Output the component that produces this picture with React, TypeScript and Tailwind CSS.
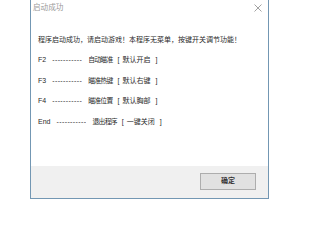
export default function App() {
  const rows = [
    { key: 'F2', label: '自动瞄准', hint: '默认开启' },
    { key: 'F3', label: '瞄准热键', hint: '默认右键' },
    { key: 'F4', label: '瞄准位置', hint: '默认胸部' },
    { key: 'End', label: '退出程序', hint: '一键关闭' },
  ];

  return (
    <div className="w-[300px] h-[200px] bg-white overflow-hidden font-['Liberation_Sans','Noto_Sans_CJK_SC',sans-serif]">
      {/* dialog window */}
      <div className="ml-[30px] w-[239px] h-[199px] flex flex-col border-x border-b border-[#7397b3] bg-white">
        {/* title bar */}
        <div className="h-[16px] flex items-center justify-between pl-[2px] pr-[5px]">
          <span className="text-[7.6px] text-[#9a9a9a] leading-none">启动成功</span>
          <svg width="8" height="8" viewBox="0 0 8 8" className="mr-[1px]">
            <path d="M0.5 0.5 L7.5 7.5 M7.5 0.5 L0.5 7.5" stroke="#8a8a8a" strokeWidth="0.8" />
          </svg>
        </div>

        {/* body */}
        <div className="flex-1 pt-[13.75px] pl-[7px] text-[7px] text-[#2a2a2a]">
          <div className="h-[20.5px] flex items-center whitespace-pre">
            程序启动成功，请启动游戏！本程序无菜单，按键开关调节功能！
          </div>
          {rows.map((r) => (
            <div key={r.key} className="h-[20.5px] flex items-center whitespace-pre">
              <span>{r.key}</span>
              <span className="ml-[6px] w-[30px] tracking-[0.4px] overflow-hidden">-----------</span>
              <span className="ml-[6px] text-[6.8px] tracking-[-0.7px]">{r.label}</span>
              <span className="ml-[5px]">[</span>
              <span className="ml-[3px]">{r.hint}</span>
              <span className="ml-[5px]">]</span>
            </div>
          ))}
        </div>

        {/* footer */}
        <div className="h-[32px] bg-[#f0f0f0] flex items-start justify-end pt-[7px] pr-[12px]">
          <button className="w-[56px] h-[17px] bg-[#e1e1e1] border border-[#adadad] text-[7px] font-bold text-[#333] flex items-center justify-center">
            确定
          </button>
        </div>
      </div>
    </div>
  );
}
